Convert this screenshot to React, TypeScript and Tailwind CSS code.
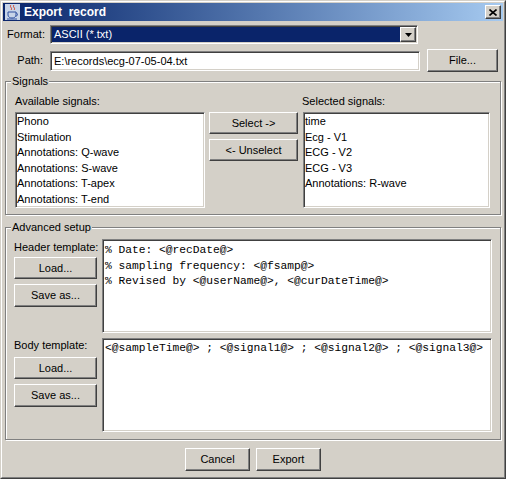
import React from "react";

const raised =
  "border border-t-white border-l-white border-b-[#404040] border-r-[#404040] shadow-[inset_-1px_-1px_0_#808080] bg-[#d4d0c8]";
const sunken =
  "border border-t-[#808080] border-l-[#808080] border-b-white border-r-white shadow-[inset_1px_1px_0_#404040,inset_-1px_-1px_0_#d4d0c8] p-[1px]";
const etched =
  "border border-[#808080] shadow-[inset_1px_1px_0_#ffffff,1px_1px_0_#ffffff]";

function Btn({ children, className }: { children: React.ReactNode; className: string }) {
  return (
    <div className={`${raised} flex items-center justify-center text-[11px] text-black ${className}`}>
      {children}
    </div>
  );
}

function JavaIcon() {
  return (
    <svg width="15" height="16" viewBox="0 0 15 16">
      <rect x="0" y="0" width="15" height="16" fill="#c8d4e8" />
      <path d="M6 1 C4 3 8 4 6 6 M9 1 C7 3 11 4 9 6" stroke="#d04020" strokeWidth="1" fill="none" />
      <path d="M3 8 H11 V11 C11 13 9 14 7 14 C5 14 3 13 3 11 Z" fill="none" stroke="#3050a0" strokeWidth="1" />
      <path d="M11 9 C13 9 13 12 11 12" fill="none" stroke="#3050a0" strokeWidth="1" />
      <path d="M2 15 H12" stroke="#3050a0" strokeWidth="1" />
    </svg>
  );
}

export default function App() {
  const available = ["Phono", "Stimulation", "Annotations: Q-wave", "Annotations: S-wave", "Annotations: T-apex", "Annotations: T-end"];
  const selected = ["time", "Ecg - V1", "ECG - V2", "ECG - V3", "Annotations: R-wave"];
  const header = ["% Date: <@recDate@>", "% sampling frequency: <@fsamp@>", "% Revised by <@userName@>, <@curDateTime@>"];
  return (
    <div className="w-[506px] h-[479px] border border-t-[#d4d0c8] border-l-[#d4d0c8] border-b-[#404040] border-r-[#404040] bg-[#d4d0c8] font-['Liberation_Sans',Arial,sans-serif] text-[11px] text-black overflow-hidden">
      <div className="w-full h-full border border-t-white border-l-white border-b-[#808080] border-r-[#808080] p-[1px] flex flex-col">
        {/* Title bar */}
        <div className="h-[18px] flex items-center bg-linear-to-r from-[#0a246a] to-[#a6caf0] pl-[2px] pr-[2px]">
          <JavaIcon />
          <div className="ml-[4px] text-white font-bold text-[12px] leading-[18px] whitespace-pre">Export  record</div>
          <div className="flex-1" />
          <div className={`${raised} w-[16px] h-[14px] flex items-center justify-center`}>
            <svg width="8" height="7" viewBox="0 0 8 7">
              <path d="M0.5 0.5 L7.5 6.5 M7.5 0.5 L0.5 6.5" stroke="#000" strokeWidth="1.6" />
            </svg>
          </div>
        </div>

        {/* Format row */}
        <div className="mt-[4px] h-[19px] flex items-center">
          <div className="w-[47px] pr-[5px] text-right">Format:</div>
          <div className={`${sunken} w-[368px] h-[19px] flex bg-white`}>
            <div className="flex-1 bg-[#0a246a] text-white pl-[2px] leading-[15px]">ASCII (*.txt)</div>
            <div className={`${raised} w-[16px] flex items-center justify-center`}>
              <svg width="7" height="4" viewBox="0 0 7 4">
                <path d="M0 0 H7 L3.5 4 Z" fill="#000" />
              </svg>
            </div>
          </div>
        </div>

        {/* Path row */}
        <div className="mt-[5px] h-[23px] flex items-center">
          <div className="w-[47px] pr-[7px] text-right">Path:</div>
          <div className={`${sunken} w-[370px] h-[20px] bg-white pl-[3px] leading-[16px]`}>E:\records\ecg-07-05-04.txt</div>
          <Btn className="ml-[7px] w-[71px] h-[23px]">File...</Btn>
        </div>

        {/* Signals group */}
        <div className={`${etched} mt-[9px] ml-[2px] w-[496px]`}>
          <div className="-mt-[8px] ml-[5px] w-fit px-[1px] h-[14px] leading-[14px] bg-[#d4d0c8]">Signals</div>
          <div className="pl-[9px] pr-[10px] pt-[6px] pb-[6px] flex">
            <div className="w-[190px] flex flex-col">
              <div className="h-[14px] leading-[14px]">Available signals:</div>
              <div className={`${sunken} mt-[4px] h-[96px] bg-white`}>
                {available.map((s) => (
                  <div key={s} className="leading-[15.5px] h-[15.5px] whitespace-nowrap">{s}</div>
                ))}
              </div>
            </div>
            <div className="ml-[4px] w-[89px] pt-[18px] flex flex-col">
              <Btn className="w-[89px] h-[22px]">Select -&gt;</Btn>
              <Btn className="mt-[5px] w-[89px] h-[22px]">&lt;- Unselect</Btn>
            </div>
            <div className="ml-[5px] w-[187px] flex flex-col">
              <div className="h-[14px] leading-[14px] -ml-[1px]">Selected signals:</div>
              <div className={`${sunken} mt-[4px] h-[96px] bg-white`}>
                {selected.map((s) => (
                  <div key={s} className="leading-[15.5px] h-[15.5px] whitespace-nowrap">{s}</div>
                ))}
              </div>
            </div>
          </div>
        </div>

        {/* Advanced setup group */}
        <div className={`${etched} mt-[12px] ml-[2px] w-[496px]`}>
          <div className="-mt-[8px] ml-[5px] w-fit px-[1px] h-[14px] leading-[14px] bg-[#d4d0c8]">Advanced setup</div>
          <div className="pl-[8px] pr-[8px] pt-[5px] pb-[7px] flex flex-col">
            <div className="flex h-[94px]">
              <div className="w-[83px] flex flex-col">
                <div className="mt-[1px] h-[14px] leading-[14px] whitespace-nowrap">Header template:</div>
                <Btn className="mt-[3px] w-[83px] h-[22px]">Load...</Btn>
                <Btn className="mt-[5px] w-[83px] h-[23px]">Save as...</Btn>
              </div>
              <div className={`${sunken} ml-[5px] w-[390px] h-[94px] bg-white pl-[2px] pt-[3px] font-['Liberation_Mono','Courier_New',monospace] text-[11.25px]`}>
                {header.map((l) => (
                  <div key={l} className="leading-[15.5px] h-[15.5px] whitespace-pre">{l}</div>
                ))}
              </div>
            </div>
            <div className="flex h-[94px] mt-[5px]">
              <div className="w-[83px] flex flex-col">
                <div className="h-[14px] leading-[14px] whitespace-nowrap">Body template:</div>
                <Btn className="mt-[5px] w-[83px] h-[22px]">Load...</Btn>
                <Btn className="mt-[5px] w-[83px] h-[23px]">Save as...</Btn>
              </div>
              <div className={`${sunken} ml-[5px] w-[390px] h-[94px] bg-white pl-[2px] pt-[2px] font-['Liberation_Mono','Courier_New',monospace] text-[11.25px]`}>
                <div className="leading-[15.5px] whitespace-pre">{"<@sampleTime@> ; <@signal1@> ; <@signal2@> ; <@signal3@>"}</div>
              </div>
            </div>
          </div>
        </div>

        {/* Bottom buttons */}
        <div className="mt-[8px] flex justify-center gap-[6px]">
          <Btn className="w-[65px] h-[23px]">Cancel</Btn>
          <Btn className="w-[65px] h-[23px]">Export</Btn>
        </div>
      </div>
    </div>
  );
}
